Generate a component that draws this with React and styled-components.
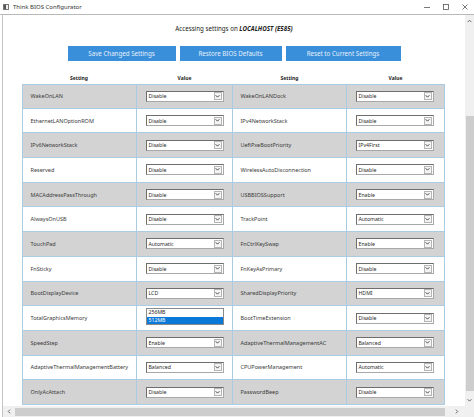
import React from "react";
import styled, { createGlobalStyle } from "styled-components";

const Global = createGlobalStyle`
  html, body { margin: 0; padding: 0; background: #fff; }
  body { font-family: "Noto Sans", "Open Sans", sans-serif; color: #222; }
  * { box-sizing: border-box; }
`;

const Window = styled.div`
  width: 474px;
  height: 417px;
  display: flex;
  flex-direction: column;
  overflow: hidden;
  background: #fff;
`;

const TitleBar = styled.div`
  height: 15px;
  display: flex;
  align-items: center;
  border-bottom: 1px solid #b9b9b9;
  padding-left: 3px;
  font-size: 6px;
  color: #333;
`;

const AppIcon = styled.div`
  width: 6px;
  height: 6px;
  border: 1px solid #777;
  background: linear-gradient(90deg, #555 40%, #eee 40%);
  margin-right: 4px;
`;

const TitleText = styled.span`
  flex: 1;
`;

const WinButton = styled.div`
  width: 19px;
  display: flex;
  justify-content: center;
  align-items: center;
  color: #444;
`;

const Body = styled.div`
  flex: 1;
  display: flex;
  min-height: 0;
  margin-left: 2px;
  border-left: 1px solid #c4c4c4;
`;

const Main = styled.div`
  flex: 1;
  display: flex;
  flex-direction: column;
  align-items: center;
  overflow: hidden;
`;

const Heading = styled.div`
  margin-top: 9px;
  height: 10px;
  font-size: 6.2px;
  line-height: 10px;
  b { font-style: italic; font-weight: 700; }
`;

const ButtonRow = styled.div`
  margin-top: 12px;
  display: flex;
  gap: 4px;
`;

const ActionButton = styled.div`
  width: ${p => p.w}px;
  height: 15px;
  background: #3a8fdb;
  color: #e6f0fa;
  font-size: 6.2px;
  display: flex;
  align-items: center;
  justify-content: center;
`;

const Tables = styled.div`
  margin-top: 14px;
  display: flex;
  margin-right: 2px;
`;

const Table = styled.div`
  display: grid;
  grid-template-columns: ${p => p.cols};
  grid-auto-rows: 24.7px;
  grid-template-rows: 9px;
`;

const HeadCell = styled.div`
  font-size: 5px;
  font-weight: 700;
  text-align: center;
  line-height: 7px;
`;

const Cell = styled.div`
  background: ${p => (p.odd ? "#d3d3d3" : "#fff")};
  border-right: 1px solid #a9cbe4;
  border-bottom: 1px solid #a9cbe4;
  border-left: ${p => (p.first ? "1px solid #a9cbe4" : "none")};
  border-top: ${p => (p.top ? "1px solid #a9cbe4" : "none")};
  display: flex;
  align-items: center;
  padding-left: ${p => (p.value ? 9 : 8)}px;
  font-size: 5.5px;
  color: #3a3a3a;
  white-space: nowrap;
  position: relative;
`;

const Select = styled.div`
  width: 78px;
  height: 11px;
  background: #fff;
  border: 1px solid #a8a8a8;
  border-top-color: #6e6e6e;
  border-left-color: #6e6e6e;
  display: flex;
  align-items: center;
  font-size: 5.2px;
  padding-left: 2px;
  color: #2a2a2a;
`;

const SelectText = styled.span`
  flex: 1;
`;

const Arrow = styled.div`
  width: 8px;
  height: 8px;
  margin-right: 1px;
  border: 1px solid #b5b5b5;
  background: #f4f4f4;
  display: flex;
  align-items: center;
  justify-content: center;
`;

const ListBox = styled.div`
  position: absolute;
  left: 9px;
  top: 2px;
  width: 78px;
  background: #fff;
  border: 1px solid #8a8a8a;
  font-size: 5.2px;
`;

const ListItem = styled.div`
  height: 7.5px;
  line-height: 7.5px;
  padding-left: 2px;
  background: ${p => (p.sel ? "#0a78d7" : "#fff")};
  color: ${p => (p.sel ? "#fff" : "#222")};
`;

const VScroll = styled.div`
  width: 9px;
  background: #f0f0f0;
  display: flex;
  flex-direction: column;
  align-items: center;
`;

const ScrollArrow = styled.div`
  height: 12px;
  display: flex;
  align-items: center;
  justify-content: center;
`;

const VThumb = styled.div`
  width: 8px;
  margin-top: 89px;
  height: 275px;
  background: #cdcdcd;
`;

const VSpacer = styled.div`
  flex: 1;
`;

const HScroll = styled.div`
  height: 11px;
  margin-left: 2px;
  border-left: 1px solid #c4c4c4;
  background: #f0f0f0;
  display: flex;
  align-items: center;
`;

const HThumb = styled.div`
  width: 430px;
  height: 8px;
  background: #cdcdcd;
`;

const HArrow = styled.div`
  width: 12px;
  display: flex;
  justify-content: center;
`;

const Chevron = ({ dir = "down", size = 5, color = "#444" }) => {
  const paths = {
    down: "M1 2 L4 5 L7 2",
    up: "M1 5 L4 2 L7 5",
    left: "M5 1 L2 4 L5 7",
    right: "M3 1 L6 4 L3 7",
  };
  return (
    <svg width={size} height={size} viewBox="0 0 8 8">
      <path d={paths[dir]} fill="none" stroke={color} strokeWidth="1.4" />
    </svg>
  );
};

const left = [
  ["WakeOnLAN", "Disable"],
  ["EthernetLANOptionROM", "Disable"],
  ["IPv6NetworkStack", "Disable"],
  ["Reserved", "Disable"],
  ["MACAddressPassThrough", "Disable"],
  ["AlwaysOnUSB", "Disable"],
  ["TouchPad", "Automatic"],
  ["FnSticky", "Disable"],
  ["BootDisplayDevice", "LCD"],
  ["TotalGraphicsMemory", null],
  ["SpeedStep", "Enable"],
  ["AdaptiveThermalManagementBattery", "Balanced"],
  ["OnlyAcAttach", "Disable"],
];

const right = [
  ["WakeOnLANDock", "Disable"],
  ["IPv4NetworkStack", "Disable"],
  ["UefiPxeBootPriority", "IPv4First"],
  ["WirelessAutoDisconnection", "Disable"],
  ["USBBIOSSupport", "Enable"],
  ["TrackPoint", "Automatic"],
  ["FnCtrlKeySwap", "Enable"],
  ["FnKeyAsPrimary", "Disable"],
  ["SharedDisplayPriority", "HDMI"],
  ["BootTimeExtension", "Disable"],
  ["AdaptiveThermalManagementAC", "Balanced"],
  ["CPUPowerManagement", "Automatic"],
  ["PasswordBeep", "Disable"],
];

const SettingsTable = ({ rows, cols, first }) => (
  <Table cols={cols}>
    <HeadCell>Setting</HeadCell>
    <HeadCell>Value</HeadCell>
    {rows.map(([name, value], i) => (
      <React.Fragment key={name}>
        <Cell odd={i % 2 === 0} first={first} top={i === 0}>
          {name}
        </Cell>
        <Cell odd={i % 2 === 0} top={i === 0} value>
          {value ? (
            <Select>
              <SelectText>{value}</SelectText>
              <Arrow>
                <Chevron size={5} color="#333" />
              </Arrow>
            </Select>
          ) : (
            <ListBox>
              <ListItem>256MB</ListItem>
              <ListItem sel>512MB</ListItem>
            </ListBox>
          )}
        </Cell>
      </React.Fragment>
    ))}
  </Table>
);

export default function App() {
  return (
    <Window>
      <Global />
      <TitleBar>
        <AppIcon />
        <TitleText>Think BIOS Configurator</TitleText>
        <WinButton>
          <svg width="6" height="6" viewBox="0 0 6 6">
            <path d="M0 3.5 H6" stroke="#555" strokeWidth="0.8" />
          </svg>
        </WinButton>
        <WinButton>
          <svg width="6" height="6" viewBox="0 0 6 6">
            <rect x="0.5" y="0.5" width="5" height="5" fill="none" stroke="#555" strokeWidth="0.8" />
          </svg>
        </WinButton>
        <WinButton>
          <svg width="6" height="6" viewBox="0 0 6 6">
            <path d="M0.5 0.5 L5.5 5.5 M5.5 0.5 L0.5 5.5" stroke="#555" strokeWidth="0.8" />
          </svg>
        </WinButton>
      </TitleBar>
      <Body>
        <Main>
          <Heading>
            Accessing settings on <b>LOCALHOST (E585)</b>
          </Heading>
          <ButtonRow>
            <ActionButton w={108}>Save Changed Settings</ActionButton>
            <ActionButton w={102}>Restore BIOS Defaults</ActionButton>
            <ActionButton w={115}>Reset to Current Settings</ActionButton>
          </ButtonRow>
          <Tables>
            <SettingsTable rows={left} cols="115px 96px" first />
            <SettingsTable rows={right} cols="114px 98px" />
          </Tables>
        </Main>
        <VScroll>
          <ScrollArrow>
            <Chevron dir="up" size={5} color="#555" />
          </ScrollArrow>
          <VThumb />
          <VSpacer />
          <ScrollArrow>
            <Chevron dir="down" size={5} color="#555" />
          </ScrollArrow>
        </VScroll>
      </Body>
      <HScroll>
        <HArrow>
          <Chevron dir="left" size={5} color="#555" />
        </HArrow>
        <HThumb />
        <VSpacer />
        <HArrow>
          <Chevron dir="right" size={5} color="#555" />
        </HArrow>
        <HArrow />
      </HScroll>
    </Window>
  );
}
